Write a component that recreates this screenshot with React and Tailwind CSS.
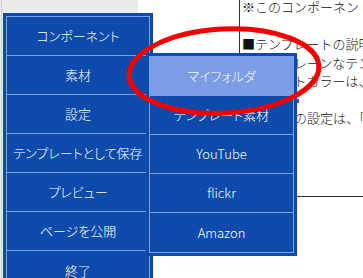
import React from 'react';

const MAIN_ITEMS = ['コンポーネント', '素材', '設定', 'テンプレートとして保存', 'プレビュー', 'ページを公開', '終了'];
const SUB_ITEMS = ['マイフォルダ', 'テンプレート素材', 'YouTube', 'flickr', 'Amazon'];

const jp = { fontFamily: '"Noto Sans CJK JP", "Noto Sans", sans-serif' };

/* ─── メニュー ─── */
const Menu = ({ items, active, className }) => (
  <div className={`absolute bg-[#0c4aab] p-[3px] ${className}`}>
    <div className="border border-[#7d9fe6]">
      {items.map((label, i) => (
        <div
          key={label}
          className={`h-[39px] flex items-center justify-center text-[13px] font-light text-white whitespace-nowrap [font-feature-settings:'palt'] ${
            i < items.length - 1 ? 'border-b border-[#7d9fe6]' : ''
          } ${i === active ? 'bg-[#7c9de6]' : ''}`}
        >
          {label}
        </div>
      ))}
    </div>
  </div>
);

export default function App() {
  return (
    <div className="relative w-[363px] h-[278px] overflow-hidden bg-white flex" style={jp}>
      {/* 左サイドバー */}
      <div className="w-[138px] h-full shrink-0 bg-[#ebebeb] flex">
        <div className="w-[1px] ml-[1px] h-full bg-[#cfcfcf]" />
      </div>

      {/* 本文ボックス */}
      <div className="flex-1 min-w-0">
        <div className="ml-[101px] h-[197px] border-l border-b border-[#333] pl-[2px] overflow-hidden">
          <div className="mt-[-2px] text-[13px] font-light leading-[18.5px] text-[#111] whitespace-nowrap">
            <p>※このコンポーネントはテンプレート</p>
            <p>&nbsp;</p>
            <p>■テンプレートの説明</p>
            <p>・ごくプレーンなテンプレートです。</p>
            <p>・テキストカラーは、グレーです。</p>
            <p>
              ・<span className="text-[#1f5fd6] underline">ヘルプ</span>
              <span className="inline-block w-[5px] h-[4px] bg-[#1f5fd6] align-middle" />
            </p>
            <p>・リンクの設定は、「マイフォルダ」</p>
          </div>
        </div>
      </div>

      {/* ドロップダウン */}
      <Menu items={MAIN_ITEMS} className="left-[3px] top-[13px] w-[150px]" />
      <Menu items={SUB_ITEMS} active={0} className="left-[146px] top-[53px] w-[151px]" />

      {/* 赤い丸 */}
      <svg className="absolute inset-0 pointer-events-none" width="363" height="278" viewBox="0 0 363 278">
        <ellipse
          cx="224"
          cy="71"
          rx="95"
          ry="42"
          transform="rotate(-3 224 71)"
          fill="none"
          stroke="#f50000"
          strokeWidth="5"
        />
      </svg>
    </div>
  );
}
